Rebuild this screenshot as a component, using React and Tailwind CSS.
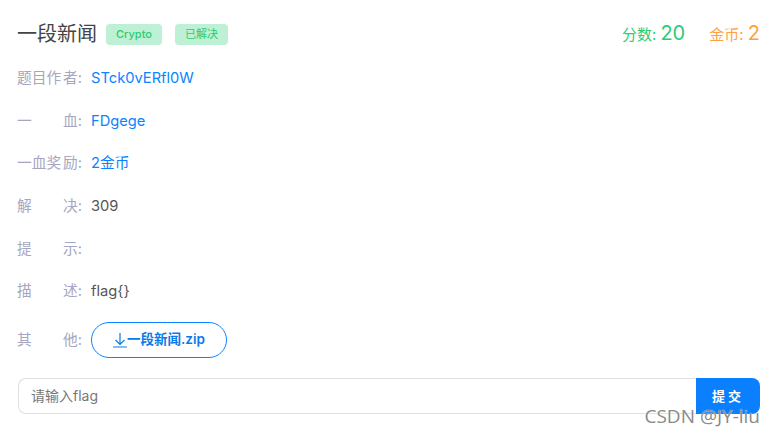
import React from 'react';

const font = "font-['Inter','Noto_Sans_CJK_SC',sans-serif]";

const Row = ({ label, className = 'h-[42.6px]', children }) => (
  <div className={`flex items-center text-[14.7px] ${className}`}>
    <div className="w-[65px] flex justify-between text-[#a6a6c0]">{label}</div>
    <div className="ml-[9px]">{children}</div>
  </div>
);

const Label = ({ a, b }) => (
  <>
    <span>{a}</span>
    <span>{b}:</span>
  </>
);

const App = () => {
  return (
    <div className={`relative w-[774px] h-[436px] bg-white overflow-hidden pl-[17px] pr-[14px] ${font}`}>
      <div className="flex items-center justify-between h-[68px]">
        <div className="flex items-center">
          <h1 className="text-xl text-[#444] font-normal">一段新闻</h1>
          <span className="ml-[9px] w-[56px] h-[21px] flex items-center justify-center rounded bg-[#bdf0d4] text-[#2ecc71] text-[11px] font-medium">Crypto</span>
          <span className="ml-[13px] w-[53px] h-[21px] flex items-center justify-center rounded bg-[#bdf0d4] text-[#2ecc71] text-[11px]">已解决</span>
        </div>
        <div className="flex items-baseline mb-[3px]">
          <span className="text-[15px] text-[#2ecc71]">分数: <span className="text-xl">20</span></span>
          <span className="ml-6 text-[15px] text-[#ff9f43]">金币: <span className="text-xl">2</span></span>
        </div>
      </div>

      <div className="-mt-[11px]">
        <Row label={<Label a="题目作" b="者" />}><span className="text-[#0a84ff]">STck0vERfl0W</span></Row>
        <Row label={<Label a="一" b="血" />}><span className="text-[#0a84ff]">FDgege</span></Row>
        <Row label={<Label a="一血奖" b="励" />}><span className="text-[#0a84ff]">2金币</span></Row>
        <Row label={<Label a="解" b="决" />}><span className="text-[#555]">309</span></Row>
        <Row label={<Label a="提" b="示" />} />
        <Row label={<Label a="描" b="述" />}><span className="text-[#555]">flag{'{}'}</span></Row>
        <Row label={<Label a="其" b="他" />} className="h-[54px]">
          <button className="flex items-center justify-center w-[136px] h-9 rounded-full border border-[#0a84ff] text-[#0a7ae8] text-[13.5px] font-semibold">
            <svg width="14" height="16" viewBox="0 0 14 16" fill="none" stroke="currentColor" strokeWidth="1.2">
              <path d="M7 1v11M2.5 8L7 12.5 11.5 8M0 15h14" />
            </svg>
            一段新闻.zip
          </button>
        </Row>
      </div>

      <div className="flex mt-[11px] ml-px h-9">
        <div className="flex-1 flex items-center pl-3 pt-px text-sm text-[#777] border border-[#e0e0e0] border-r-0 rounded-l-lg">请输入flag</div>
        <button className="w-16 flex items-center justify-center pt-0.5 bg-[#0a80ff] text-white text-[13px] font-semibold tracking-[3px] rounded-r-lg">提交</button>
      </div>

      <div className="absolute right-[14px] top-[404px] text-[19px] leading-6 text-[#8a8a8a] [text-shadow:0_0_1px_#fff] font-['Open_Sans','DejaVu_Sans',sans-serif]">CSDN @JY-liu</div>
    </div>
  );
};

export default App;
